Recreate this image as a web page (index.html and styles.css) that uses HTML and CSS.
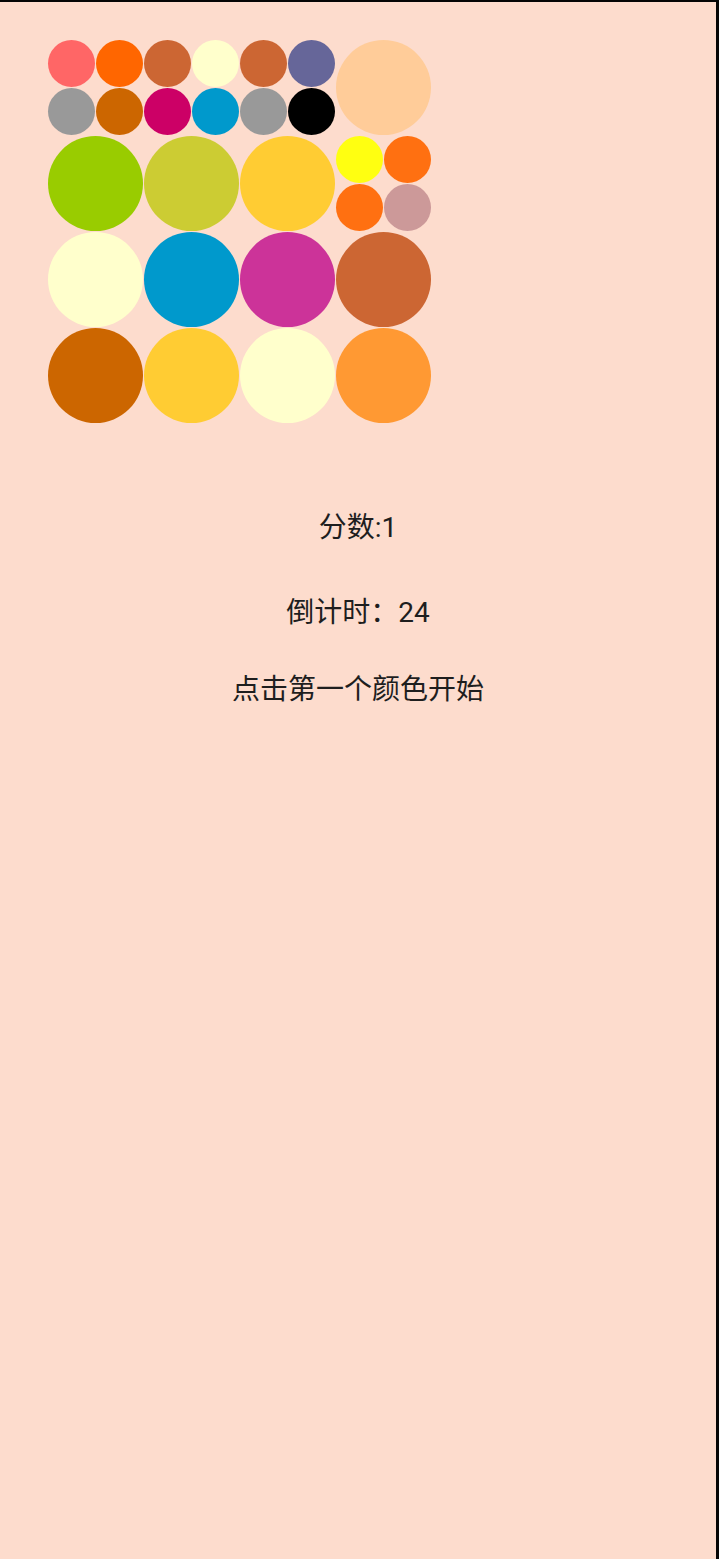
FILE: index.html
```html
<!DOCTYPE html>
<html lang="zh-CN">
<head>
<meta charset="utf-8">
<title>颜色游戏</title>
<link rel="stylesheet" href="styles.css">
</head>
<body>
<div class="screen">
  <div class="board">
    <div class="quad">
      <span class="dot c-ff6666"></span><span class="dot c-ff6600"></span>
      <span class="dot c-999999"></span><span class="dot c-cc6600"></span>
    </div>
    <div class="quad">
      <span class="dot c-cc6633"></span><span class="dot c-ffffcc"></span>
      <span class="dot c-cc0066"></span><span class="dot c-0099cc"></span>
    </div>
    <div class="quad">
      <span class="dot c-cc6633"></span><span class="dot c-666699"></span>
      <span class="dot c-999999"></span><span class="dot c-000000"></span>
    </div>
    <div class="big c-ffcc99"></div>

    <div class="big c-99cc00"></div>
    <div class="big c-cccc33"></div>
    <div class="big c-ffcc33"></div>
    <div class="quad">
      <span class="dot c-ffff00"></span><span class="dot c-ff7011"></span>
      <span class="dot c-ff7011"></span><span class="dot c-cc9999"></span>
    </div>

    <div class="big c-ffffcc"></div>
    <div class="big c-0099cc"></div>
    <div class="big c-cc3399"></div>
    <div class="big c-cc6633"></div>

    <div class="big c-cc6600"></div>
    <div class="big c-ffcc33"></div>
    <div class="big c-ffffcc"></div>
    <div class="big c-ff9933"></div>
  </div>

  <div class="info">
    <p class="line score">分数:1</p>
    <p class="line timer">倒计时：24</p>
    <p class="line hint">点击第一个颜色开始</p>
  </div>
</div>
</body>
</html>
```

FILE: styles.css
```css
html, body {
  margin: 0;
  padding: 0;
  background: #fddccd;
}

.screen {
  box-sizing: border-box;
  width: 719px;
  height: 1559px;
  border-top: 2px solid #050505;
  border-right: 3px solid #050505;
  background: #fddccd;
  padding-top: 38px;
  font-family: Roboto, "Noto Sans CJK SC", "Noto Sans", sans-serif;
  color: #1e1e1e;
}

.board {
  margin-left: 48px;
  width: 384px;
  display: grid;
  grid-template-columns: repeat(4, 96px);
  grid-auto-rows: 96px;
}

.big {
  width: 95px;
  height: 95px;
  border-radius: 50%;
}

.quad {
  display: grid;
  grid-template-columns: repeat(2, 48px);
  grid-template-rows: repeat(2, 48px);
}

.dot {
  display: block;
  width: 47px;
  height: 47px;
  border-radius: 50%;
}

.c-ff6666 { background: #ff6666; }
.c-ff6600 { background: #ff6600; }
.c-999999 { background: #999999; }
.c-cc6600 { background: #cc6600; }
.c-cc6633 { background: #cc6633; }
.c-ffffcc { background: #ffffcc; }
.c-cc0066 { background: #cc0066; }
.c-0099cc { background: #0099cc; }
.c-666699 { background: #666699; }
.c-000000 { background: #000000; }
.c-ffcc99 { background: #ffcc99; }
.c-99cc00 { background: #99cc00; }
.c-cccc33 { background: #cccc33; }
.c-ffcc33 { background: #ffcc33; }
.c-ffff00 { background: #ffff11; }
.c-ff7011 { background: #ff7011; }
.c-cc9999 { background: #cc9999; }
.c-cc3399 { background: #cc3399; }
.c-ff9933 { background: #ff9933; }

.info {
  display: flex;
  flex-direction: column;
  align-items: center;
  margin-top: 84px;
}

.line {
  margin: 0;
  font-size: 28px;
  font-weight: 400;
  line-height: 40px;
  text-align: center;
}

.timer {
  margin-top: 45px;
}

.hint {
  margin-top: 37px;
}
```
